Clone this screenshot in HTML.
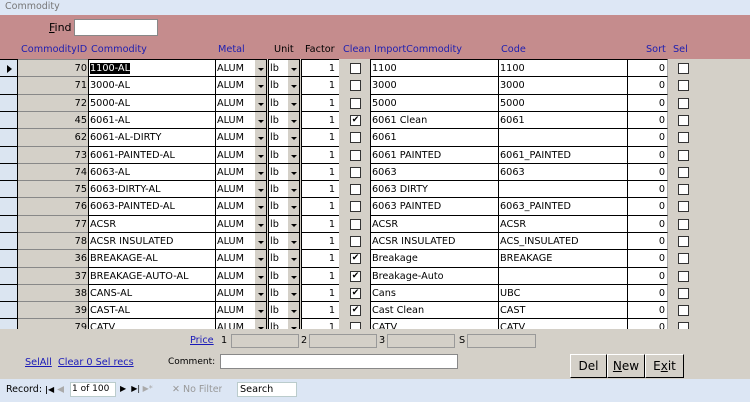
<!DOCTYPE html>
<html><head><style>
*{margin:0;padding:0;box-sizing:border-box}
body{width:750px;height:402px;overflow:hidden;background:#d4d0c8;font-family:"DejaVu Sans","Liberation Sans",sans-serif;font-size:9.7px;color:#000;position:relative}
.a{position:absolute;white-space:nowrap;overflow:hidden}
.title{left:0;top:0;width:750px;height:15px;background:#dde7f5;color:#777;padding:1px 0 0 5px;font-size:9.5px}
.hdr{left:0;top:15px;width:750px;height:44px;background:#c58c8d}
.h{top:44px;color:#2020b0}
.row{position:absolute;left:0;width:750px;height:18px}
.row div{position:absolute;top:0;height:18px;line-height:17px;white-space:nowrap;overflow:hidden}
.sl{left:0;width:18px;background:#dbe5f1;border-top:1px solid #000;border-right:1px solid #000}
.id{left:18px;width:70px;background:#d4d0c8;text-align:right;padding-right:1px;border-top:1px solid #888}
.w{background:#fff;border-top:1px solid #000;border-left:1px solid #000;padding-left:1px}
.c{left:88px;width:127px}
.m{left:215px;width:40px}
.dd{background:#d4d0c8;width:12px;border-top:1px solid #000;border-right:1px solid #000}
.dd:after{content:"";position:absolute;left:3px;top:8px;border:3px solid transparent;border-top:3px solid #000;border-bottom:0}
.u{left:268px;width:20px}
.f{left:301px;width:38px;text-align:right;padding-right:4px}
.cl{left:339px;width:31px;background:#d4d0c8}
.cb{position:absolute;width:11px;height:11px;background:#fff;border:1px solid #333;top:4px;font-size:9px;line-height:9px;text-align:center}
.i{left:370px;width:128px}
.co{left:498px;width:129px}
.s{left:627px;width:41px;text-align:right;padding-right:2px;border-right:1px solid #aaa}
.lnk{color:#1a1ab8;text-decoration:underline}
.box{background:#d4d0c8;border:1px solid #999;height:14px}
.btn{top:354px;height:24px;border-right:1px solid #000;border-bottom:1px solid #000;background:#d4d0c8;font-size:12px;text-align:center;line-height:22px;border-left:1px solid #fff;border-top:1px solid #fff}
.status{left:0;top:379px;width:750px;height:23px;background:#dce6f4}
</style></head><body>
<div class="a title">Commodity</div>
<div class="a hdr"></div>
<div class="a" style="left:49px;top:21px;font-size:11px"><u>F</u>ind</div>
<div class="a" style="left:74px;top:19px;width:84px;height:17px;background:#fff;border:1px solid #888"></div>
<div class="a h" style="left:21px">CommodityID</div>
<div class="a h" style="left:91px">Commodity</div>
<div class="a h" style="left:218px">Metal</div>
<div class="a h" style="left:274px;color:#000">Unit</div>
<div class="a h" style="left:305px;color:#000">Factor</div>
<div class="a h" style="left:343px">Clean</div>
<div class="a h" style="left:374px">ImportCommodity</div>
<div class="a h" style="left:501px">Code</div>
<div class="a h" style="left:646px">Sort</div>
<div class="a h" style="left:673px">Sel</div>

<div class="row" style="top:59px"><div class="sl"><span style="position:absolute;left:7px;top:5px;border:4px solid transparent;border-left:5px solid #000;border-right:0"></span></div><div class="id">70</div><div class="w c"><span style="background:#000;color:#fff">1100-AL</span></div><div class="w m">ALUM</div><div class="dd" style="left:255px"></div><div class="w u">lb</div><div class="dd" style="left:288px"></div><div class="w f">1</div><div class="cl"><span class="cb" style="left:11px"></span></div><div class="w i">1100</div><div class="w co">1100</div><div class="w s">0</div><span class="cb" style="left:678px"></span></div>
<div class="row" style="top:76px"><div class="sl"></div><div class="id">71</div><div class="w c">3000-AL</div><div class="w m">ALUM</div><div class="dd" style="left:255px"></div><div class="w u">lb</div><div class="dd" style="left:288px"></div><div class="w f">1</div><div class="cl"><span class="cb" style="left:11px"></span></div><div class="w i">3000</div><div class="w co">3000</div><div class="w s">0</div><span class="cb" style="left:678px"></span></div>
<div class="row" style="top:94px"><div class="sl"></div><div class="id">72</div><div class="w c">5000-AL</div><div class="w m">ALUM</div><div class="dd" style="left:255px"></div><div class="w u">lb</div><div class="dd" style="left:288px"></div><div class="w f">1</div><div class="cl"><span class="cb" style="left:11px"></span></div><div class="w i">5000</div><div class="w co">5000</div><div class="w s">0</div><span class="cb" style="left:678px"></span></div>
<div class="row" style="top:111px"><div class="sl"></div><div class="id">45</div><div class="w c">6061-AL</div><div class="w m">ALUM</div><div class="dd" style="left:255px"></div><div class="w u">lb</div><div class="dd" style="left:288px"></div><div class="w f">1</div><div class="cl"><span class="cb" style="left:11px">✔</span></div><div class="w i">6061 Clean</div><div class="w co">6061</div><div class="w s">0</div><span class="cb" style="left:678px"></span></div>
<div class="row" style="top:128px"><div class="sl"></div><div class="id">62</div><div class="w c">6061-AL-DIRTY</div><div class="w m">ALUM</div><div class="dd" style="left:255px"></div><div class="w u">lb</div><div class="dd" style="left:288px"></div><div class="w f">1</div><div class="cl"><span class="cb" style="left:11px"></span></div><div class="w i">6061</div><div class="w co"></div><div class="w s">0</div><span class="cb" style="left:678px"></span></div>
<div class="row" style="top:146px"><div class="sl"></div><div class="id">73</div><div class="w c">6061-PAINTED-AL</div><div class="w m">ALUM</div><div class="dd" style="left:255px"></div><div class="w u">lb</div><div class="dd" style="left:288px"></div><div class="w f">1</div><div class="cl"><span class="cb" style="left:11px"></span></div><div class="w i">6061 PAINTED</div><div class="w co">6061_PAINTED</div><div class="w s">0</div><span class="cb" style="left:678px"></span></div>
<div class="row" style="top:163px"><div class="sl"></div><div class="id">74</div><div class="w c">6063-AL</div><div class="w m">ALUM</div><div class="dd" style="left:255px"></div><div class="w u">lb</div><div class="dd" style="left:288px"></div><div class="w f">1</div><div class="cl"><span class="cb" style="left:11px"></span></div><div class="w i">6063</div><div class="w co">6063</div><div class="w s">0</div><span class="cb" style="left:678px"></span></div>
<div class="row" style="top:180px"><div class="sl"></div><div class="id">75</div><div class="w c">6063-DIRTY-AL</div><div class="w m">ALUM</div><div class="dd" style="left:255px"></div><div class="w u">lb</div><div class="dd" style="left:288px"></div><div class="w f">1</div><div class="cl"><span class="cb" style="left:11px"></span></div><div class="w i">6063 DIRTY</div><div class="w co"></div><div class="w s">0</div><span class="cb" style="left:678px"></span></div>
<div class="row" style="top:197px"><div class="sl"></div><div class="id">76</div><div class="w c">6063-PAINTED-AL</div><div class="w m">ALUM</div><div class="dd" style="left:255px"></div><div class="w u">lb</div><div class="dd" style="left:288px"></div><div class="w f">1</div><div class="cl"><span class="cb" style="left:11px"></span></div><div class="w i">6063 PAINTED</div><div class="w co">6063_PAINTED</div><div class="w s">0</div><span class="cb" style="left:678px"></span></div>
<div class="row" style="top:215px"><div class="sl"></div><div class="id">77</div><div class="w c">ACSR</div><div class="w m">ALUM</div><div class="dd" style="left:255px"></div><div class="w u">lb</div><div class="dd" style="left:288px"></div><div class="w f">1</div><div class="cl"><span class="cb" style="left:11px"></span></div><div class="w i">ACSR</div><div class="w co">ACSR</div><div class="w s">0</div><span class="cb" style="left:678px"></span></div>
<div class="row" style="top:232px"><div class="sl"></div><div class="id">78</div><div class="w c">ACSR INSULATED</div><div class="w m">ALUM</div><div class="dd" style="left:255px"></div><div class="w u">lb</div><div class="dd" style="left:288px"></div><div class="w f">1</div><div class="cl"><span class="cb" style="left:11px"></span></div><div class="w i">ACSR INSULATED</div><div class="w co">ACS_INSULATED</div><div class="w s">0</div><span class="cb" style="left:678px"></span></div>
<div class="row" style="top:249px"><div class="sl"></div><div class="id">36</div><div class="w c">BREAKAGE-AL</div><div class="w m">ALUM</div><div class="dd" style="left:255px"></div><div class="w u">lb</div><div class="dd" style="left:288px"></div><div class="w f">1</div><div class="cl"><span class="cb" style="left:11px">✔</span></div><div class="w i">Breakage</div><div class="w co">BREAKAGE</div><div class="w s">0</div><span class="cb" style="left:678px"></span></div>
<div class="row" style="top:267px"><div class="sl"></div><div class="id">37</div><div class="w c">BREAKAGE-AUTO-AL</div><div class="w m">ALUM</div><div class="dd" style="left:255px"></div><div class="w u">lb</div><div class="dd" style="left:288px"></div><div class="w f">1</div><div class="cl"><span class="cb" style="left:11px">✔</span></div><div class="w i">Breakage-Auto</div><div class="w co"></div><div class="w s">0</div><span class="cb" style="left:678px"></span></div>
<div class="row" style="top:284px"><div class="sl"></div><div class="id">38</div><div class="w c">CANS-AL</div><div class="w m">ALUM</div><div class="dd" style="left:255px"></div><div class="w u">lb</div><div class="dd" style="left:288px"></div><div class="w f">1</div><div class="cl"><span class="cb" style="left:11px">✔</span></div><div class="w i">Cans</div><div class="w co">UBC</div><div class="w s">0</div><span class="cb" style="left:678px"></span></div>
<div class="row" style="top:301px"><div class="sl"></div><div class="id">39</div><div class="w c">CAST-AL</div><div class="w m">ALUM</div><div class="dd" style="left:255px"></div><div class="w u">lb</div><div class="dd" style="left:288px"></div><div class="w f">1</div><div class="cl"><span class="cb" style="left:11px">✔</span></div><div class="w i">Cast Clean</div><div class="w co">CAST</div><div class="w s">0</div><span class="cb" style="left:678px"></span></div>
<div class="row" style="top:318px"><div class="sl"></div><div class="id">79</div><div class="w c">CATV</div><div class="w m">ALUM</div><div class="dd" style="left:255px"></div><div class="w u">lb</div><div class="dd" style="left:288px"></div><div class="w f">1</div><div class="cl"><span class="cb" style="left:11px"></span></div><div class="w i">CATV</div><div class="w co">CATV</div><div class="w s">0</div><span class="cb" style="left:678px"></span></div>
<div class="a" style="left:0;top:329px;width:750px;height:50px;background:#d4d0c8"></div>

<div class="a lnk" style="left:190px;top:335px">Price</div>
<div class="a" style="left:221px;top:335px">1</div>
<div class="a box" style="left:231px;top:334px;width:68px"></div>
<div class="a" style="left:301px;top:335px">2</div>
<div class="a box" style="left:309px;top:334px;width:68px"></div>
<div class="a" style="left:379px;top:335px">3</div>
<div class="a box" style="left:387px;top:334px;width:68px"></div>
<div class="a" style="left:459px;top:335px">S</div>
<div class="a box" style="left:467px;top:334px;width:69px"></div>
<div class="a lnk" style="left:25px;top:357px">SelAll</div>
<div class="a lnk" style="left:58px;top:357px">Clear 0 Sel recs</div>
<div class="a" style="left:168px;top:357px;font-size:9px">Comment:</div>
<div class="a" style="left:220px;top:354px;width:238px;height:15px;background:#fff;border:1px solid #888"></div>
<div class="a btn" style="left:570px;width:37px">Del</div>
<div class="a btn" style="left:607px;width:38px"><u>N</u>ew</div>
<div class="a btn" style="left:645px;width:39px">E<u>x</u>it</div>

<div class="a status"></div>
<div class="a" style="left:6px;top:384px;font-size:9.5px">Record: <b style="font-size:8px">|◀</b> <span style="color:#aaa">◀</span></div>
<div class="a" style="left:70px;top:382px;width:46px;height:15px;background:#fff;border:1px solid #bcc;padding:1px 1px;font-size:9px">1 of 100</div>
<div class="a" style="left:120px;top:384px;font-size:8px">▶ &nbsp;▶| <span style="color:#aaa">▶*</span></div>
<div class="a" style="left:172px;top:384px;color:#999;font-size:9.5px">✕ No Filter</div>
<div class="a" style="left:237px;top:382px;width:60px;height:15px;background:#fff;border:1px solid #bcc;padding:1px 2px">Search</div>
</body></html>
